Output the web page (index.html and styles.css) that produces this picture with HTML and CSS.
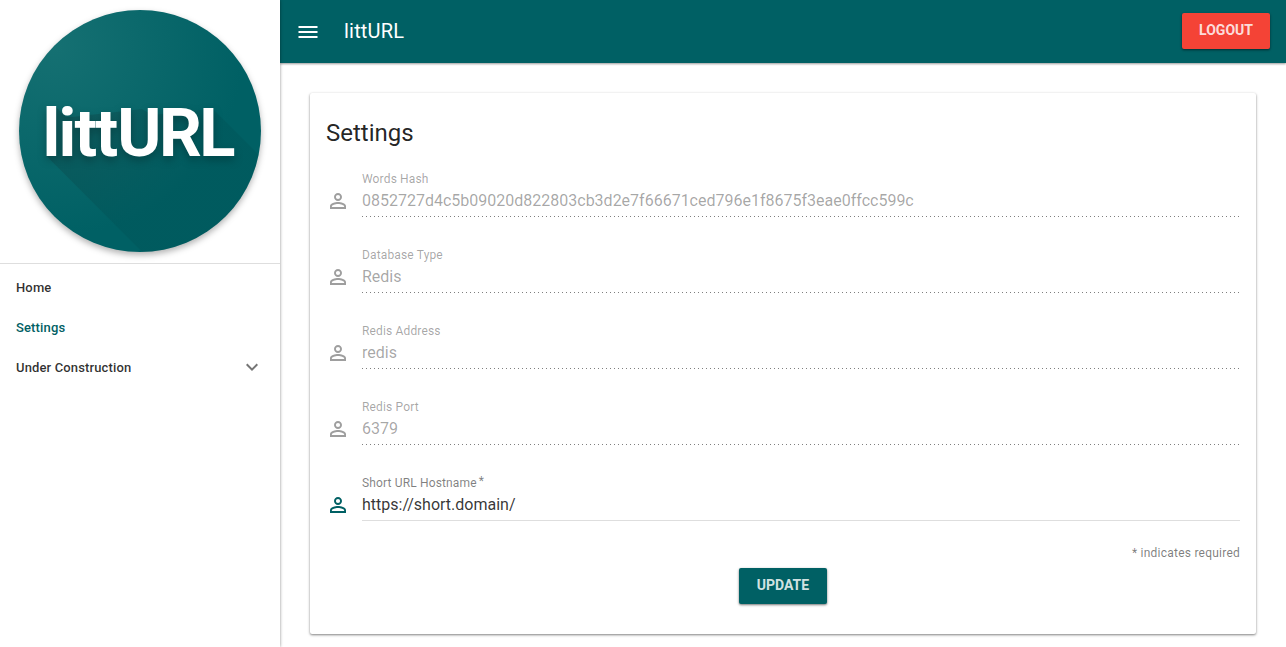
FILE: index.html
```html
<!DOCTYPE html>
<html lang="en">
<head>
<meta charset="utf-8">
<title>littURL</title>
<link rel="stylesheet" href="styles.css">
</head>
<body>
<svg class="defs" width="0" height="0" aria-hidden="true">
  <symbol id="person" viewBox="0 0 24 24"><path d="M12 5.9a2.1 2.1 0 1 1 0 4.2 2.1 2.1 0 0 1 0-4.2m0 9c2.97 0 6.1 1.46 6.1 2.1v1.1H5.9V17c0-.64 3.13-2.1 6.1-2.1M12 4C9.79 4 8 5.79 8 8s1.79 4 4 4 4-1.79 4-4-1.79-4-4-4zm0 9c-2.67 0-8 1.34-8 4v3h16v-3c0-2.66-5.33-4-8-4z"/></symbol>
</svg>
<div class="app">
  <aside class="drawer">
    <div class="brand">
      <svg class="logo" viewBox="0 0 280 263" width="280" height="263">
        <defs>
          <radialGradient id="sheen" gradientUnits="userSpaceOnUse" cx="54" cy="46" r="190"><stop offset="0" stop-color="#157072"/><stop offset="1" stop-color="#006064"/></radialGradient>
          <linearGradient id="cast" gradientUnits="userSpaceOnUse" x1="90" y1="90" x2="175" y2="175"><stop offset="0" stop-color="#142020" stop-opacity=".2"/><stop offset="1" stop-color="#003c40" stop-opacity=".15"/></linearGradient>
          <clipPath id="disc"><circle cx="140" cy="131" r="121"/></clipPath>
        </defs>
        <circle class="logo-disc" cx="140" cy="131" r="121" fill="url(#sheen)"/>
        <path clip-path="url(#disc)" fill="url(#cast)" d="M46 155.500 56 107l10 10h6l70-8 10 6 57-6h4L320 216V290H180z"/>
        <text class="logo-text" x="42.500 58.500 74.500 95.500 117.200 159 199.300" y="155.500">littURL</text>
      </svg>
    </div>
    <nav class="nav">
      <a class="nav-item">Home</a>
      <a class="nav-item nav-active">Settings</a>
      <a class="nav-item">Under Construction
        <svg class="chevron" width="24" height="24" viewBox="0 0 24 24"><path d="M7.410 8.590 12 13.170l4.590-4.580L18 10l-6 6-6-6z"/></svg>
      </a>
    </nav>
  </aside>
  <div class="main">
    <header class="toolbar">
      <svg class="menu" width="24" height="24" viewBox="0 0 24 24"><path d="M2.500 6h19v2h-19zM2.500 11h19v2h-19zM2.500 16h19v2h-19z"/></svg>
      <span class="title">littURL</span>
      <button class="btn btn-red">LOGOUT</button>
    </header>
    <section class="card">
      <h1 class="heading">Settings</h1>
      <div class="field disabled"><svg class="icon"><use href="#person"/></svg><div class="input"><label class="label">Words Hash</label><div class="value">0852727d4c5b09020d822803cb3d2e7f66671ced796e1f8675f3eae0ffcc599c</div></div></div>
      <div class="field disabled"><svg class="icon"><use href="#person"/></svg><div class="input"><label class="label">Database Type</label><div class="value">Redis</div></div></div>
      <div class="field disabled"><svg class="icon"><use href="#person"/></svg><div class="input"><label class="label">Redis Address</label><div class="value">redis</div></div></div>
      <div class="field disabled"><svg class="icon"><use href="#person"/></svg><div class="input"><label class="label">Redis Port</label><div class="value">6379</div></div></div>
      <div class="field"><svg class="icon"><use href="#person"/></svg><div class="input"><label class="label">Short URL Hostname<span class="star">*</span></label><div class="value">https://short.domain/</div></div></div>
      <p class="note">* indicates required</p>
      <div class="actions"><button class="btn btn-teal">UPDATE</button></div>
    </section>
  </div>
</div>
</body>
</html>
```
FILE: styles.css
```css
* { box-sizing: border-box; }
body { margin: 0; background: #fff; font-family: Roboto, sans-serif; color: rgba(0,0,0,.87); overflow: hidden; }
.defs { display: none; }
.app { display: flex; height: 647px; }
.drawer { width: 280px; flex: none; background: #fff; box-shadow: 0 0 3px rgba(0,0,0,.45); z-index: 1; clip-path: inset(0 -4px 0 0); }
.brand { height: 264px; border-bottom: 1px solid #dedede; overflow: hidden; }
.logo { display: block; }
.logo-disc { filter: drop-shadow(0 3px 3px rgba(0,0,0,.3)); }
.logo-text { font: 700 67px Roboto, sans-serif; fill: #fff; filter: drop-shadow(0 4px 4px rgba(0,0,0,.25)); }
.nav { padding-top: 4px; }
.nav-item { height: 40px; padding: 0 16px 2px; display: flex; align-items: center; justify-content: space-between; font-size: 13px; font-weight: 500; letter-spacing: .14px; color: rgba(0,0,0,.82); }
.nav-item.nav-active { color: #006064; }
.chevron { fill: rgba(0,0,0,.54); }
.main { flex: 1; min-width: 0; }
.toolbar { height: 63px; background: #006064; color: #fff; display: flex; align-items: center; padding: 0 16px 1px; box-shadow: 0 1px 2px rgba(0,0,0,.4); }
.menu { fill: #fff; margin-top: 1px; }
.title { margin-left: 24px; font-size: 20px; font-weight: 400; letter-spacing: .2px; flex: 1; line-height: 24px; }
.btn { height: 36px; width: 88px; padding: 0 0 2px; border: 0; border-radius: 2px; font: 700 14px/34px Roboto, sans-serif; color: rgba(255,255,255,.84); box-shadow: 0 1px 3px rgba(0,0,0,.3), 0 1px 2px rgba(0,0,0,.3); }
.btn-red { background: #f44336; }
.btn-teal { background: #006064; }
.card { margin: 30px 30px 0; height: 541px; padding: 24px 16px; border-radius: 2px; box-shadow: 0 1px 3px rgba(0,0,0,.3), 0 1px 2px rgba(0,0,0,.24); }
.heading { margin: 0 0 21px; font-size: 24px; font-weight: 400; line-height: 32px; }
.field { height: 76px; display: flex; }
.icon { width: 24px; height: 24px; margin: 19px 12px 0 0; fill: #006064; }
.disabled .icon { fill: rgba(0,0,0,.38); }
.input { flex: 1; height: 47px; border-bottom: 1px solid #dedede; }
.label { display: block; height: 16px; margin-top: 1px; font-size: 12px; line-height: 16px; letter-spacing: .15px; color: rgba(0,0,0,.5); }
.star { margin-left: 2px; position: relative; top: -2px; }
.value { font-size: 16px; line-height: 28px; color: rgba(0,0,0,.8); }
.disabled .label, .disabled .value { color: rgba(0,0,0,.36); }
.disabled .input { border-bottom: 0; background: repeating-linear-gradient(to right, rgba(0,0,0,.5) 0 1px, transparent 1px 4px) 0 100% / 100% 1px no-repeat; }
.note { margin: -5px 0 0; font-size: 12px; line-height: 16px; letter-spacing: .23px; color: rgba(0,0,0,.52); text-align: right; }
.actions { display: flex; justify-content: center; margin-top: 7px; }
```
